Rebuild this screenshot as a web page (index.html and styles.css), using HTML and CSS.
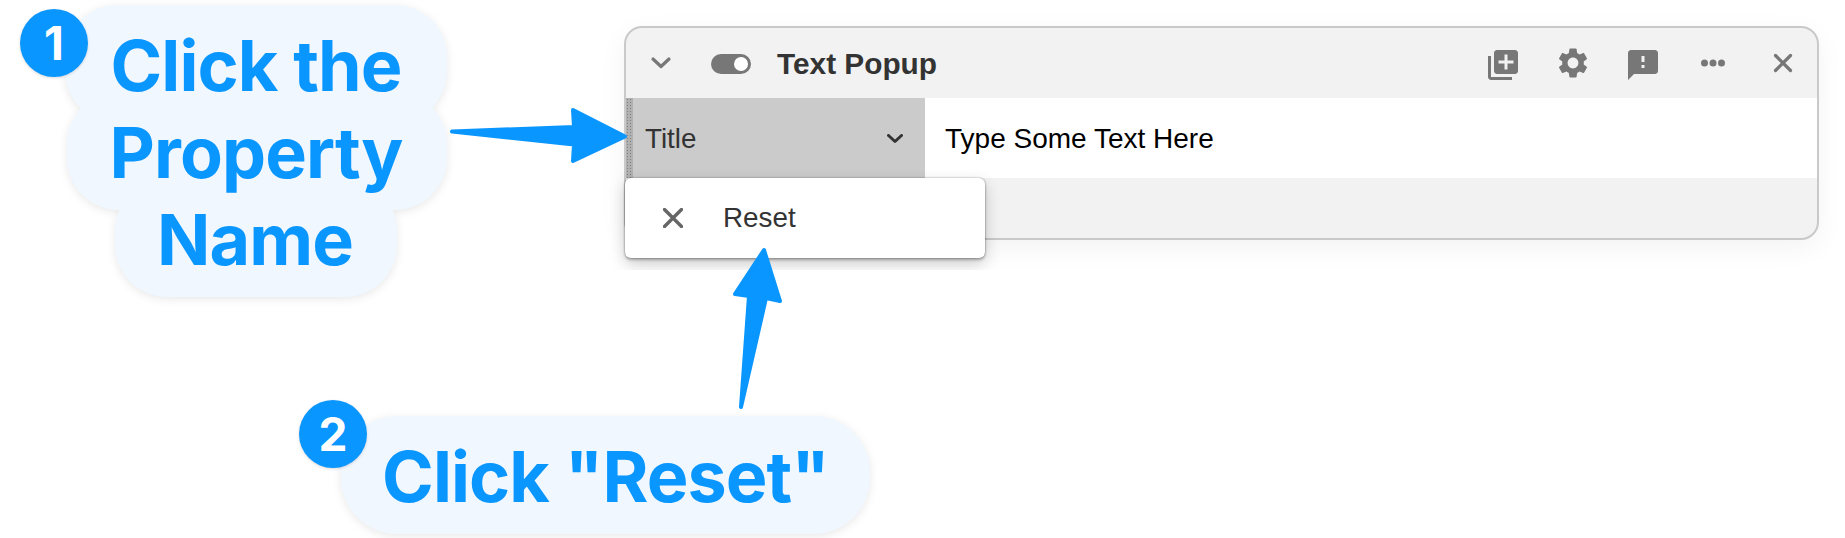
FILE: index.html
```html
<!DOCTYPE html>
<html lang="en">
<head>
<meta charset="utf-8">
<title>Reset a property</title>
<link rel="stylesheet" href="styles.css">
</head>
<body>
<div class="page">
  <section class="shot">
    <div class="card">
      <header class="card-head">
        <span class="head-btn">
          <svg class="icon" viewBox="0 0 36 36"><path class="stroke" d="M10 14l8 7.500 8-7.500"/></svg>
        </span>
        <svg class="toggle" viewBox="0 0 40 20"><rect width="40" height="20" rx="10" class="fill"/><circle cx="30" cy="10" r="7" fill="#fff"/></svg>
        <h1 class="card-title">Text Popup</h1>
        <div class="head-tools">
          <span class="head-btn"><svg class="icon icon-low" viewBox="0 0 24 24"><path class="fill" d="M4 6H2v14c0 1.100.9 2 2 2h14v-2H4V6zm16-4H8c-1.100 0-2 .9-2 2v12c0 1.100.9 2 2 2h12c1.100 0 2-.9 2-2V4c0-1.100-.9-2-2-2zm-1 9h-4v4h-2v-4H9V9h4V5h2v4h4v2z"/></svg></span>
          <span class="head-btn"><svg class="icon" viewBox="0 0 24 24"><path class="fill" d="M19.140 12.940c.04-.3.06-.61.06-.94 0-.32-.02-.64-.07-.94l2.030-1.580c.18-.14.23-.41.12-.61l-1.920-3.320c-.12-.22-.37-.29-.59-.22l-2.390.96c-.5-.38-1.030-.7-1.620-.94l-.36-2.540c-.04-.24-.24-.41-.48-.41h-3.840c-.24 0-.43.17-.47.41l-.36 2.540c-.59.24-1.130.57-1.620.94l-2.390-.96c-.22-.08-.47 0-.59.22L2.740 8.870c-.12.21-.08.47.12.61l2.030 1.580c-.05.3-.09.63-.09.94s.02.64.07.94l-2.030 1.580c-.18.14-.23.41-.12.61l1.920 3.320c.12.22.37.29.59.22l2.390-.96c.5.38 1.030.7 1.620.94l.36 2.540c.05.24.24.41.48.41h3.840c.24 0 .44-.17.47-.41l.36-2.540c.59-.24 1.130-.56 1.620-.94l2.390.96c.22.08.47 0 .59-.22l1.920-3.320c.12-.22.07-.47-.12-.61l-2.010-1.580zM12 15.600c-1.980 0-3.600-1.620-3.600-3.600s1.620-3.600 3.600-3.600 3.600 1.620 3.600 3.600-1.620 3.600-3.600 3.600z"/></svg></span>
          <span class="head-btn"><svg class="icon icon-low" viewBox="0 0 24 24"><path class="fill" d="M20 2H4c-1.100 0-1.990.9-1.990 2L2 22l4-4h14c1.100 0 2-.9 2-2V4c0-1.100-.9-2-2-2zm-7 12h-2v-2h2v2zm0-4h-2V6h2v4z"/></svg></span>
          <span class="head-btn"><svg class="icon" viewBox="0 0 36 36"><circle class="fill" cx="9.500" cy="18" r="3.500"/><circle class="fill" cx="18" cy="18" r="3.500"/><circle class="fill" cx="26.500" cy="18" r="3.500"/></svg></span>
          <span class="head-btn"><svg class="icon" viewBox="0 0 36 36"><path class="stroke" d="M10.500 10.500l15 15m0-15l-15 15"/></svg></span>
        </div>
      </header>
      <div class="prop-row">
        <div class="prop-name">
          <span class="prop-handle"></span>
          <span class="prop-label">Title</span>
          <svg class="prop-chevron" viewBox="0 0 16 10"><path d="M1.500 1.500l6.500 6 6.500-6"/></svg>
        </div>
        <div class="prop-value"><span>Type Some Text Here</span></div>
      </div>
      <div class="card-foot"></div>
      <div class="menu">
        <svg class="menu-icon" viewBox="0 0 20 20"><path d="M1.500 1.500l17 17m0-17l-17 17"/></svg>
        <span>Reset</span>
      </div>
    </div>
  </section>

  <svg class="arrows" viewBox="0 0 1845 538" aria-hidden="true">
    <path d="M452 131.500L574 127L573 110L625 136.500L573 161L574 144.500Z"/>
    <path d="M741 407L749 296L735 294L764 250L780 301L766 298Z"/>
  </svg>

  <div class="callout callout-one">
    <span class="bubble bubble-a"><span class="bubble-text">Click the</span></span>
    <span class="bubble bubble-b"><span class="bubble-text">Property</span></span>
    <span class="bubble bubble-c"><span class="bubble-text">Name</span></span>
  </div>
  <span class="badge badge-one">1</span>

  <div class="callout callout-two">
    <span class="bubble bubble-d"><span class="bubble-text">Click "Reset"</span></span>
  </div>
  <span class="badge badge-two">2</span>
</div>
</body>
</html>
```

FILE: styles.css
```css
* { box-sizing: border-box; }

html, body { margin: 0; padding: 0; background: #fff; }

.page {
  position: relative;
  width: 1845px;
  height: 538px;
  overflow: hidden;
  font-family: "Liberation Sans", Arial, sans-serif;
}

/* embedded screenshot, clipped so the shadow is cut off at its edges */
.shot {
  margin-left: 601px;
  width: 1244px;
  height: 270px;
  padding: 26px 26px 0 23px;
  overflow: hidden;
}

.card {
  position: relative;
  width: 1195px;
  height: 214px;
  display: flex;
  flex-direction: column;
  background: #f2f2f2;
  border: 2px solid #c9c9c9;
  border-radius: 18px;
  box-shadow: 0 8px 28px rgba(0, 0, 0, .05);
}

.card-head {
  height: 70px;
  display: flex;
  align-items: center;
}

.head-btn {
  width: 70px;
  height: 70px;
  display: flex;
  align-items: center;
  justify-content: center;
  flex: none;
}

.icon { width: 36px; height: 36px; }
.icon-low { margin-top: 4px; }

.fill { fill: #777; }
.stroke { fill: none; stroke: #777; stroke-width: 3.200; stroke-linecap: round; stroke-linejoin: round; }

.toggle { width: 40px; height: 20px; margin-left: 15px; margin-top: 2px; flex: none; }

.card-title {
  margin: 2px 0 0 26px;
  font-size: 29.800px;
  font-weight: 700;
  color: #333;
}

.head-tools { display: flex; margin-left: auto; margin-right: -1px; }

.prop-row {
  height: 80px;
  display: flex;
  background: #fff;
}

.prop-name {
  position: relative;
  width: 299px;
  display: flex;
  align-items: center;
  padding: 2px 22px 0 19px;
  background: #cbcbcb;
  color: #333;
  font-size: 27.800px;
}

.prop-handle {
  position: absolute;
  left: 0;
  top: 0;
  bottom: 0;
  width: 7px;
  background-color: #b0b0b0;
  background-image: radial-gradient(#808080 .8px, transparent 1px);
  background-size: 3px 3px;
}

.prop-label { flex: 1; }

.prop-chevron { width: 16px; height: 10px; fill: none; stroke: #333; stroke-width: 3; stroke-linecap: round; stroke-linejoin: round; }

.prop-value {
  flex: 1;
  display: flex;
  align-items: center;
  padding: 2px 0 0 20px;
  color: #000;
  font-size: 28px;
}

.card-foot { flex: 1; }

.menu {
  position: absolute;
  left: -1px;
  top: 150px;
  width: 360px;
  height: 80px;
  display: flex;
  align-items: center;
  gap: 40px;
  padding-left: 38px;
  background: #fff;
  border-radius: 6px;
  color: #333;
  font-size: 27.800px;
  box-shadow: 0 0 2px rgba(0, 0, 0, .4), 0 2px 3px rgba(0, 0, 0, .25), 0 6px 16px rgba(0, 0, 0, .2);
}

.menu-icon { width: 20px; height: 20px; fill: none; stroke: #666; stroke-width: 3.400; stroke-linecap: round; }

/* annotations laid over the screenshot */
.arrows {
  position: absolute;
  inset: 0;
  width: 1845px;
  height: 538px;
}

.arrows path {
  fill: #0a96ff;
  stroke: #0a96ff;
  stroke-width: 4;
  stroke-linejoin: round;
}

.callout {
  position: absolute;
  display: flex;
  flex-direction: column;
  align-items: center;
  color: #0a96ff;
  font-family: Inter, "Liberation Sans", sans-serif;
  font-size: 70px;
  font-weight: 700;
  letter-spacing: -.9px;
  filter: drop-shadow(0 2px 4px rgba(0, 0, 0, .09));
}

.callout-one { left: 65px; top: 5px; width: 382px; }
.callout-two { left: 341px; top: 416px; width: 529px; }

.bubble {
  height: 118px;
  display: flex;
  align-items: center;
  justify-content: center;
  background: #f0f7ff;
  border-radius: 52px;
  white-space: nowrap;
}

.bubble-text { position: relative; z-index: 1; top: 1px; }

.bubble-a { width: 382px; }
.bubble-b { width: 380px; margin-top: -31px; align-self: flex-end; padding-right: 2px; }
.bubble-c { width: 282px; margin-top: -31px; padding-right: 2px; }
.bubble-d { width: 529px; border-radius: 56px; }

.badge {
  position: absolute;
  width: 68px;
  height: 68px;
  display: flex;
  align-items: center;
  justify-content: center;
  border-radius: 50%;
  background: #0a96ff;
  color: #fff;
  font-family: Inter, "Liberation Sans", sans-serif;
  font-size: 46px;
  font-weight: 700;
  box-shadow: 0 1px 3px rgba(0, 0, 0, .15);
}

.badge-one { left: 20px; top: 9px; }
.badge-two { left: 299px; top: 400px; }
```
